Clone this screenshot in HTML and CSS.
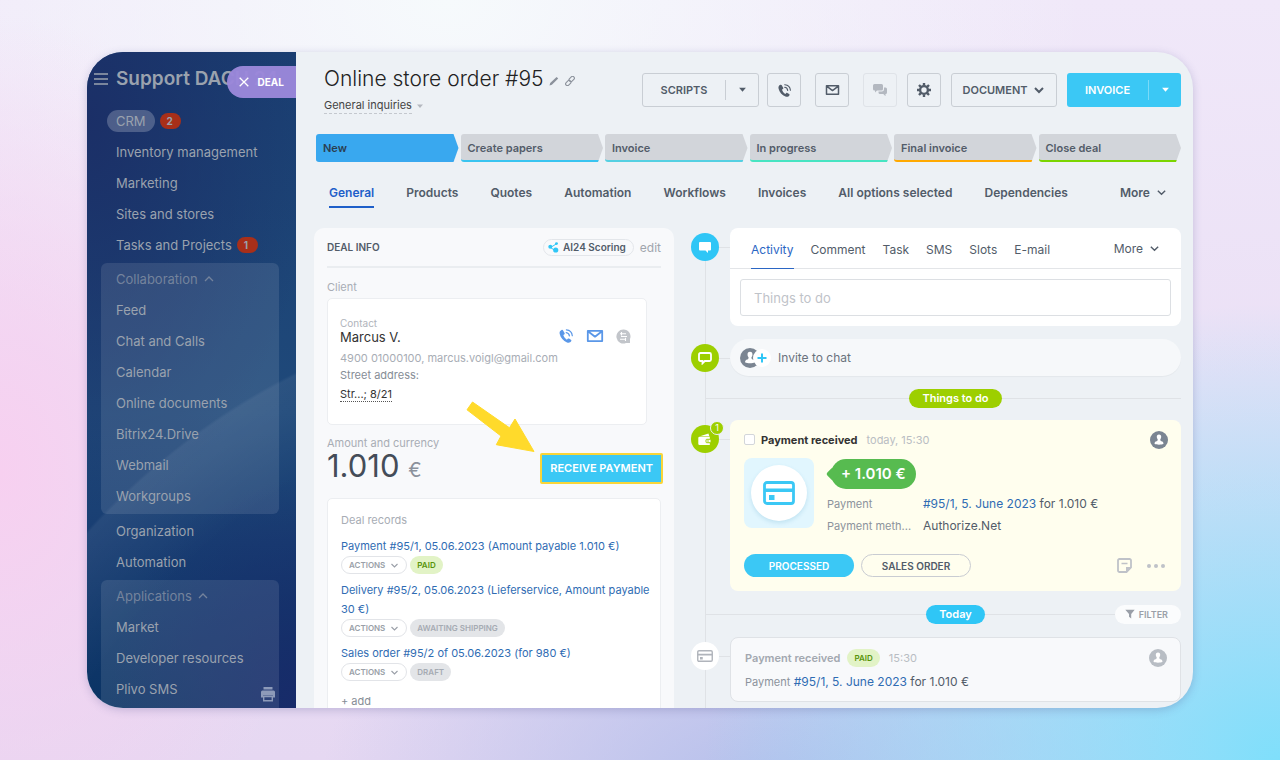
FILE: index.html
```html
<!DOCTYPE html>
<html lang="en">
<head>
    <meta charset="UTF-8" />
    <meta name="viewport" content="width=device-width, initial-scale=1.0" />
    <title>Online store order #95</title>
    <link rel="stylesheet" href="styles.css">
</head>
<body>
    <!-- shared icons -->
    <svg width="0" height="0" class="sprite" aria-hidden="true">
        <symbol id="i-down" viewBox="0 0 12 12"><path d="M2 4l4 4 4-4" fill="none" stroke="currentColor" stroke-width="1.5"/></symbol>
        <symbol id="i-up" viewBox="0 0 12 12"><path d="M2 8l4-4 4 4" fill="none" stroke="currentColor" stroke-width="1.3"/></symbol>
        <symbol id="i-caret" viewBox="0 0 8 8"><path d="M1 2.5h6L4 6z" fill="currentColor"/></symbol>
        <symbol id="i-phone" viewBox="0 0 16 16">
            <path d="M3.6 1.9C2 2.6 1.2 4 1.7 6c.9 3.8 3.6 7 7.3 8.4 1.9.6 3.5.1 4.3-1.4.3-.5.1-.9-.4-1.2l-1.9-1.2c-.5-.3-.9-.2-1.3.2l-.8.9C7.3 10.7 6 9 5.3 7.1l.9-.6c.5-.3.6-.7.5-1.2L5.1 2.4c-.3-.6-.8-.8-1.5-.5z" fill="currentColor"/>
            <path d="M8.2 4.600c1.700.2 3 1.500 3.200 3.300M8.400 1.800c3.200.3 5.600 2.700 5.900 5.900" fill="none" stroke="currentColor" stroke-width="1.2" stroke-linecap="round"/>
        </symbol>
        <symbol id="i-mail" viewBox="0 0 18 14"><path d="M1.8 1.900h14.400v10.200H1.800zM2 2.300l7 5.400 7-5.400" fill="none" stroke="currentColor" stroke-width="1.8" stroke-linejoin="round"/></symbol>
        <symbol id="i-card" viewBox="0 0 32 24">
            <rect x="1.5" y="1.5" width="29" height="21" rx="2.5" fill="none" stroke="currentColor" stroke-width="2.8"/>
            <path d="M1 7.500h30v3.500H1zM6 14h5.500v5H6z" fill="currentColor"/>
        </symbol>
        <symbol id="i-user" viewBox="0 0 18 18">
            <circle cx="9" cy="9" r="9" fill="currentColor"/>
            <path d="M9 3.400c1.600 0 2.300 1.100 2.200 2.600 0 1-.4 1.800-.9 2.300 0 1 .2 1.700 1.100 2 1.400.4 2 .9 2.100 2.500-1.200.7-2.800.9-4.500.9s-3.300-.2-4.500-.9c.1-1.600.7-2.100 2.100-2.500.9-.3 1.100-1 1.100-2-.5-.5-.9-1.300-.9-2.300C6.700 4.500 7.400 3.400 9 3.400z" fill="#fff"/>
        </symbol>
    </svg>

    <div class="window">
        <aside class="sidebar">
            <div class="brand">
                <button class="burger" aria-label="Menu"><svg width="14" height="12" viewBox="0 0 14 12"><path d="M0 1h14M0 6h14M0 11h14" stroke="currentColor" stroke-width="1.3"/></svg></button>
                <span class="brand-name">Support DACH 24</span>
            </div>
            <button class="deal-tab"><svg width="10" height="10" viewBox="0 0 10 10"><path d="M.7.7l8.600 8.600M9.300.7L.7 9.300" stroke="currentColor" stroke-width="1.3"/></svg>DEAL</button>
            <nav>
                <ul class="menu">
                    <li><a href="#" class="current">CRM</a><span class="count">2</span></li>
                    <li><a href="#">Inventory management</a></li>
                    <li><a href="#">Marketing</a></li>
                    <li><a href="#">Sites and stores</a></li>
                    <li><a href="#">Tasks and Projects</a><span class="count">1</span></li>
                </ul>
                <ul class="menu group">
                    <li><button class="group-title">Collaboration <svg width="12" height="12"><use href="#i-up"/></svg></button></li>
                    <li><a href="#">Feed</a></li>
                    <li><a href="#">Chat and Calls</a></li>
                    <li><a href="#">Calendar</a></li>
                    <li><a href="#">Online documents</a></li>
                    <li><a href="#">Bitrix24.Drive</a></li>
                    <li><a href="#">Webmail</a></li>
                    <li><a href="#">Workgroups</a></li>
                </ul>
                <ul class="menu">
                    <li><a href="#">Organization</a></li>
                    <li><a href="#">Automation</a></li>
                </ul>
                <ul class="menu group last">
                    <li><button class="group-title">Applications <svg width="12" height="12"><use href="#i-up"/></svg></button></li>
                    <li><a href="#">Market</a></li>
                    <li><a href="#">Developer resources</a></li>
                    <li><a href="#">Plivo SMS</a></li>
                </ul>
            </nav>
            <button class="print" aria-label="Print">
                <svg width="14" height="15" viewBox="0 0 14 15"><path d="M2.500 0h9v2.500h-9zM1.500 3.500h11A1.500 1.500 0 0 1 14 5v5.500h-2V8.500H2v2H0V5a1.500 1.500 0 0 1 1.500-1.500z" fill="currentColor"/><path d="M2.700 9.500h8.600v4.300H2.700z" fill="none" stroke="currentColor" stroke-width="1.4"/></svg>
            </button>
        </aside>

        <main>
            <header>
                <div class="heading">
                    <h1>Online store order #95
                        <svg width="10" height="10" viewBox="0 0 10 10"><path d="M.5 9.500l.7-2.500L7.600 1l1.600 1.500L2.900 8.700z" fill="#8b919b"/></svg>
                        <svg width="10" height="10" viewBox="0 0 10 10"><g fill="none" stroke="#8b919b" stroke-width="1.1"><rect x="3.7" y="1.2" width="6" height="3.6" rx="1.8" transform="rotate(-45 6.7 3)"/><rect x=".3" y="5.2" width="6" height="3.6" rx="1.8" transform="rotate(-45 3.3 7)"/></g></svg>
                    </h1>
                    <button class="pipeline"><span>General inquiries</span><svg width="8" height="8"><use href="#i-caret"/></svg></button>
                </div>
                <div class="toolbar">
                    <div class="split">
                        <button>SCRIPTS</button>
                        <button class="split-arrow" aria-label="More scripts"><svg width="9" height="9"><use href="#i-caret"/></svg></button>
                    </div>
                    <button class="square" aria-label="Call"><svg width="15" height="15"><use href="#i-phone"/></svg></button>
                    <button class="square spaced" aria-label="E-mail"><svg width="15" height="12"><use href="#i-mail"/></svg></button>
                    <button class="square spaced" aria-label="Chat" disabled>
                        <svg width="15" height="13" viewBox="0 0 15 13"><path d="M1.500 0h7A1.500 1.500 0 0 1 10 1.500V5a1.500 1.500 0 0 1-1.500 1.500H4L2 8.500v-2h-.5A1.500 1.500 0 0 1 0 5V1.500A1.500 1.500 0 0 1 1.500 0z" fill="currentColor"/><path d="M11 3.500h1.500A1.500 1.500 0 0 1 14 5v3.500a1.500 1.500 0 0 1-1.500 1.500v2.200L10.300 10H7a1.500 1.500 0 0 1-1.500-1.500V7.500h3.300A2.200 2.200 0 0 0 11 5.300z" fill="currentColor"/></svg>
                    </button>
                    <button class="square" aria-label="Settings">
                        <svg width="14" height="14" viewBox="0 0 14 14"><circle cx="7" cy="7" r="3.9" fill="none" stroke="currentColor" stroke-width="2.4"/><path d="M7 0v2.500M7 11.500V14M0 7h2.500M11.500 7H14M2 2l1.800 1.800M10.200 10.200L12 12M12 2l-1.800 1.800M3.800 10.200L2 12" stroke="currentColor" stroke-width="2.4"/></svg>
                    </button>
                    <button class="document">DOCUMENT <svg width="14" height="14" viewBox="0 0 14 14"><path d="M3 5l4 4 4-4" fill="none" stroke="currentColor" stroke-width="2"/></svg></button>
                    <div class="split invoice">
                        <button>INVOICE</button>
                        <button class="split-arrow" aria-label="More invoice options"><svg width="9" height="9"><use href="#i-caret"/></svg></button>
                    </div>
                </div>
            </header>

            <ol class="stages">
                <li class="active">New</li>
                <li class="cyan">Create papers</li>
                <li class="teal">Invoice</li>
                <li class="mint">In progress</li>
                <li class="orange">Final invoice</li>
                <li class="green">Close deal</li>
            </ol>

            <nav class="tabs">
                <a href="#" class="active">General</a>
                <a href="#">Products</a>
                <a href="#">Quotes</a>
                <a href="#">Automation</a>
                <a href="#">Workflows</a>
                <a href="#">Invoices</a>
                <a href="#">All options selected</a>
                <a href="#">Dependencies</a>
                <button>More <svg width="11" height="11"><use href="#i-down"/></svg></button>
            </nav>

            <div class="columns">
                <section class="deal">
                    <div class="deal-head">
                        <h2>DEAL INFO</h2>
                        <button class="scoring"><svg width="11" height="11" viewBox="0 0 11 11"><path d="M2.500 5.500L8.500 1.800M2.500 5.500l4.500 3" stroke="#2fc6f6"/><circle cx="2.3" cy="4.8" r="2" fill="#2fc6f6"/><circle cx="8.5" cy="1.6" r="1.4" fill="#2fc6f6"/><circle cx="7.7" cy="8" r="2.6" fill="#2fc6f6"/></svg>AI24 Scoring</button>
                        <button class="edit">edit</button>
                    </div>
                    <p class="label">Client</p>
                    <div class="box contact">
                        <div class="contact-top">
                            <div>
                                <p class="tiny">Contact</p>
                                <p class="name">Marcus V.</p>
                            </div>
                            <div class="contact-icons">
                                <button aria-label="Call contact"><svg width="16" height="16"><use href="#i-phone"/></svg></button>
                                <button aria-label="Mail contact"><svg width="18" height="14"><use href="#i-mail"/></svg></button>
                                <button class="off" aria-label="Message contact"><svg width="15" height="15" viewBox="0 0 15 15"><path d="M7.500.5a7 7 0 0 1 6.500 9.600V14h-4a7 7 0 1 1-2.500-13.500z" fill="currentColor"/><path d="M4 4.700h6M5 7.500h6M4 10.300h6M5.500 3v3.400M9.500 8.700v3.300" stroke="#fff" stroke-width="1.1"/></svg></button>
                            </div>
                        </div>
                        <p class="reach">4900 01000100, marcus.voigl@gmail.com</p>
                        <p class="street">Street address:</p>
                        <a href="#" class="address">Str...; 8/21</a>
                    </div>
                    <p class="label amount-label">Amount and currency</p>
                    <div class="amount">
                        <p>1.010 <span>€</span></p>
                        <div class="receive-wrap">
                            <button class="receive">RECEIVE PAYMENT</button>
                            <svg class="arrow" width="69" height="51" viewBox="0 0 69 51"><path d="M6.500 1L1 8.800l34 26.200-4.700 8.700L68 50.500 49 18l-5.500 8.800z" fill="#ffda2b" stroke="#ffda2b" stroke-linejoin="round"/></svg>
                        </div>
                    </div>
                    <div class="box records">
                        <p class="label">Deal records</p>
                        <a href="#">Payment #95/1, 05.06.2023 (Amount payable 1.010 €)</a>
                        <div class="record-row"><button class="actions">ACTIONS <svg width="9" height="9"><use href="#i-down"/></svg></button><span class="tag paid">PAID</span></div>
                        <a href="#">Delivery #95/2, 05.06.2023 (Lieferservice, Amount payable 30 €)</a>
                        <div class="record-row"><button class="actions">ACTIONS <svg width="9" height="9"><use href="#i-down"/></svg></button><span class="tag">AWAITING SHIPPING</span></div>
                        <a href="#">Sales order #95/2 of 05.06.2023 (for 980 €)</a>
                        <div class="record-row"><button class="actions">ACTIONS <svg width="9" height="9"><use href="#i-down"/></svg></button><span class="tag">DRAFT</span></div>
                        <button class="add">+ add</button>
                    </div>
                </section>

                <section class="timeline">
                    <div class="row first">
                        <span class="dot blue"><svg width="12" height="11" viewBox="0 0 12 11"><path d="M1 0h10a1 1 0 0 1 1 1v6.500a1 1 0 0 1-1 1H9V11L6.500 8.500H1a1 1 0 0 1-1-1V1a1 1 0 0 1 1-1z" fill="#fff"/></svg></span>
                        <div class="card editor">
                            <nav class="editor-tabs">
                                <a href="#" class="active">Activity</a>
                                <a href="#">Comment</a>
                                <a href="#">Task</a>
                                <a href="#">SMS</a>
                                <a href="#">Slots</a>
                                <a href="#">E-mail</a>
                                <button>More <svg width="11" height="11"><use href="#i-down"/></svg></button>
                            </nav>
                            <input type="text" aria-label="Things to do" placeholder="Things to do" />
                        </div>
                    </div>

                    <div class="row invite-row">
                        <span class="dot lime"><svg width="14" height="13" viewBox="0 0 14 13"><path d="M2.500 1h9A1.500 1.500 0 0 1 13 2.500v5A1.500 1.500 0 0 1 11.500 9H6.800L4.500 11.300V9h-2A1.500 1.500 0 0 1 1 7.500v-5A1.500 1.500 0 0 1 2.500 1z" fill="none" stroke="#fff" stroke-width="1.8"/></svg></span>
                        <button class="invite">
                            <svg width="32" height="20" viewBox="0 0 32 20"><svg x="0" y="0" width="20" height="20" class="grey"><use href="#i-user"/></svg><circle cx="22" cy="10" r="9" fill="#fff"/><path d="M22 5.500v9M17.500 10h9" stroke="#2fc6f6" stroke-width="2"/></svg>
                            Invite to chat
                        </button>
                    </div>

                    <div class="divider"><span class="pill lime">Things to do</span></div>

                    <div class="row pay-row">
                        <span class="dot lime"><svg width="14" height="13" viewBox="0 0 14 13"><path d="M2 3.200L10.500.5l.8 2.700z" fill="#fff"/><path d="M1.500 3.800h10.300v8.200H1.500A1.300 1.300 0 0 1 .3 10.700V5A1.300 1.300 0 0 1 1.500 3.800z" fill="#fff"/><rect x="8" y="6.3" width="5" height="3.4" rx=".8" fill="#fff" stroke="#9dcf00"/><circle cx="10" cy="8" r=".8" fill="#9dcf00"/></svg><b class="badge">1</b></span>
                        <article class="card payment">
                            <div class="payment-head">
                                <input type="checkbox" id="done" />
                                <label for="done">Payment received</label>
                                <time>today, 15:30</time>
                                <svg class="grey" width="18" height="18"><use href="#i-user"/></svg>
                            </div>
                            <div class="payment-body">
                                <div class="logo"><span><svg width="32" height="24"><use href="#i-card"/></svg></span></div>
                                <div class="payment-info">
                                    <p class="sum">+ 1.010 €</p>
                                    <dl>
                                        <dt>Payment</dt><dd><a href="#">#95/1, 5. June 2023</a> for 1.010 €</dd>
                                        <dt title="Payment method">Payment meth...</dt><dd>Authorize.Net</dd>
                                    </dl>
                                </div>
                            </div>
                            <div class="payment-foot">
                                <button class="processed">PROCESSED</button>
                                <button class="sales">SALES ORDER</button>
                                <button class="note" aria-label="Note"><svg width="15" height="15" viewBox="0 0 15 15"><path d="M2.500 1h10A1.500 1.500 0 0 1 14 2.500V9.500L9.500 14h-7A1.500 1.500 0 0 1 1 12.500v-10A1.500 1.500 0 0 1 2.500 1z" fill="none" stroke="currentColor" stroke-width="1.8"/><path d="M4.500 5.500h6" stroke="currentColor" stroke-width="1.5"/><path d="M9 9h5v1l-4 4H9z" fill="currentColor"/></svg></button>
                                <button class="dots" aria-label="More actions"><svg width="18" height="4" viewBox="0 0 18 4"><g fill="currentColor"><circle cx="2" cy="2" r="2"/><circle cx="9" cy="2" r="2"/><circle cx="16" cy="2" r="2"/></g></svg></button>
                            </div>
                        </article>
                    </div>

                    <div class="divider today"><span class="pill blue">Today</span><button class="filter"><svg width="10" height="10" viewBox="0 0 10 10"><path d="M.3.800h9.400L6.200 5v4.500L4 7.800V5z" fill="currentColor"/></svg>FILTER</button></div>

                    <div class="row log-row">
                        <span class="dot white"><svg width="16" height="12"><use href="#i-card"/></svg></span>
                        <article class="card log">
                            <div class="log-head">
                                <h3>Payment received</h3>
                                <span class="tag paid">PAID</span>
                                <time>15:30</time>
                                <svg width="18" height="18"><use href="#i-user"/></svg>
                            </div>
                            <p><span>Payment</span> <a href="#">#95/1, 5. June 2023</a> for 1.010 €</p>
                        </article>
                    </div>
                </section>
            </div>
        </main>
    </div>
</body>
</html>
```
FILE: styles.css
```css
* {
    box-sizing: border-box;
}
body {
    margin: 0;
    height: 100vh;
    padding: 52px 87px;
    font-family: Inter, "Liberation Sans", sans-serif;
    font-size: 12px;
    color: #525c69;
    overflow: hidden;
    background:
        radial-gradient(ellipse 45% 60% at 100% 100%, #7fdffb 0%, rgba(127,223,251,0) 100%),
        radial-gradient(ellipse 35% 40% at 60% 105%, #b3bfeb 0%, rgba(179,191,235,0) 100%),
        radial-gradient(ellipse 25% 60% at 0% 62%, #f7d0f0 0%, rgba(247,208,240,0) 100%),
        radial-gradient(ellipse 50% 60% at 35% 0%, #f6fafc 0%, rgba(246,250,252,0) 100%),
        linear-gradient(#f0e8f9, #e6d8f2);
}
h1, h2, h3, p, ul, ol, dl, dd {
    margin: 0;
    padding: 0;
}
ul, ol {
    list-style: none;
}
a {
    color: inherit;
    text-decoration: none;
}
button {
    font: inherit;
    color: inherit;
    background: none;
    border: 0;
    padding: 0;
    cursor: pointer;
    white-space: nowrap;
}
button svg {
    flex: none;
}
.sprite {
    position: absolute;
}
.window {
    display: flex;
    height: 100%;
    border-radius: 36px;
    overflow: hidden;
    background: #edf1f5;
    box-shadow: 0 2px 8px rgba(70,70,140,0.25);
}

/* sidebar */
.sidebar {
    position: relative;
    flex: none;
    width: 209px;
    overflow: hidden;
    color: #9aa2ae;
    background:
        radial-gradient(circle at 530px 961px, rgba(255,255,255,0) 620px, rgba(255,255,255,0.06) 714px, rgba(255,255,255,0) 717px),
        radial-gradient(ellipse 90% 35% at 100% 100%, #182b6a 0%, rgba(24,43,106,0) 100%),
        radial-gradient(ellipse 110% 60% at 0% 10%, #1b2f67 0%, rgba(27,47,103,0) 100%),
        linear-gradient(#1a3f72, #1f497a 55%, #183d72 75%, #0a3364);
}
.brand {
    display: flex;
    align-items: center;
    gap: 8px;
    height: 53px;
    padding-left: 7px;
}
.burger {
    display: flex;
}
.brand-name {
    font-size: 19px;
    font-weight: 600;
    white-space: nowrap;
}
.deal-tab {
    position: absolute;
    top: 14px;
    right: 0;
    display: flex;
    align-items: center;
    gap: 9px;
    height: 32px;
    padding: 0 12px;
    border-radius: 16px 0 0 16px;
    background: rgba(155,135,218,0.97);
    color: #fff;
    font-size: 10px;
    font-weight: 700;
}
.menu {
    padding: 0 14px;
    font-size: 13px;
}
.menu li {
    display: flex;
    align-items: center;
    gap: 5px;
    height: 31px;
    padding-left: 15px;
}
.menu.group {
    margin: 3px 17px 1px 14px;
    padding: 0 0 3px;
    border-radius: 6px;
    background: rgba(255,255,255,0.1);
}
.menu.group.last {
    margin-bottom: 0;
    padding-bottom: 20px;
}
.current {
    margin-left: -9px;
    padding: 3px 9px;
    border-radius: 11px;
    background: rgba(255,255,255,0.22);
}
.count {
    min-width: 21px;
    padding: 0 7px;
    border-radius: 8px;
    background: #a82f19;
    font-size: 10px;
    font-weight: 700;
    line-height: 16px;
}
.group-title {
    display: flex;
    align-items: center;
    gap: 5px;
    color: #74839c;
}
.print {
    position: absolute;
    right: 21px;
    bottom: 3px;
    color: #8d9ab9;
}

/* header */
main {
    flex: 1;
    min-width: 0;
    padding: 13px 12px 0 18px;
}
header {
    display: flex;
    justify-content: space-between;
    height: 48px;
    padding-left: 10px;
}
h1 {
    font-size: 21px;
    font-weight: 300;
    line-height: 27px;
    color: #222;
    white-space: nowrap;
}
.pipeline {
    display: flex;
    align-items: center;
    gap: 4px;
    margin-top: 6px;
    font-size: 11px;
    line-height: 15px;
    color: #444;
}
.pipeline span {
    border-bottom: 1px dashed #c4c8ce;
}
.pipeline svg {
    color: #b4b8bf;
}
.toolbar {
    display: flex;
    align-items: center;
    gap: 10px;
    height: 34px;
    margin-top: 8px;
    font-size: 11px;
    font-weight: 600;
    color: #525c69;
}
.split, .square, .document {
    display: flex;
    align-items: center;
    justify-content: center;
    height: 34px;
    border: 1px solid #c9ced4;
    border-radius: 3px;
}
.split {
    width: 117px;
}
.split > button {
    flex: 1;
}
.split .split-arrow {
    flex: none;
    width: 33px;
    height: 20px;
    border-left: 1px solid #c9ced4;
}
.split + .square {
    margin-left: -2px;
}
.square {
    width: 34px;
}
.square.spaced {
    margin-left: 4px;
}
.square:disabled {
    color: #b3b8c0;
    border-color: #dfe3e8;
}
.document {
    gap: 4px;
    width: 106px;
}
.invoice {
    width: 114px;
    border: 0;
    background: #3bc8f5;
    color: #fff;
}
.invoice .split-arrow {
    border-color: #7adaf8;
}

/* stages */
.stages {
    display: grid;
    grid-template-columns: repeat(6, 1fr);
    gap: 2px;
    margin: 21px 0 0 2px;
}
.stages li {
    height: 28px;
    padding-left: 7px;
    border-bottom: 2px solid;
    border-radius: 3px;
    background: #d2d5da;
    color: #525c69;
    font-size: 11px;
    font-weight: 600;
    line-height: 28px;
    clip-path: polygon(0 0, calc(100% - 5px) 0, 100% 50%, calc(100% - 5px) 100%, 0 100%);
}
.stages .active {
    background: #39a8ef;
    border-color: #39a8ef;
    color: #2b3f52;
}
.stages .cyan { border-color: #39c4f0; }
.stages .teal { border-color: #55d0e2; }
.stages .mint { border-color: #47e4c2; }
.stages .orange { border-color: #ffa900; }
.stages .green { border-color: #7bd500; }

/* tabs */
.tabs {
    display: flex;
    justify-content: space-between;
    padding: 0 14px 0 15px;
    margin-top: 17px;
    font-size: 12px;
    font-weight: 600;
    line-height: 27px;
}
.tabs a {
    border-bottom: 2px solid transparent;
}
.tabs .active {
    color: #1f5fc9;
    border-color: #1f5fc9;
}
.tabs button, .editor-tabs button {
    display: flex;
    align-items: center;
    gap: 6px;
}
.tabs button {
    height: 27px;
    margin-left: 20px;
}

.columns {
    display: grid;
    grid-template-columns: 360fr 490fr;
    gap: 17px;
    margin-top: 20px;
}

/* deal */
.deal {
    min-width: 0;
    padding: 0 13px 40px;
    border-radius: 10px;
    background: #f8f9fb;
}
.deal-head {
    display: flex;
    align-items: center;
    height: 40px;
    border-bottom: 2px solid #eaedf0;
}
h2 {
    flex: 1;
    font-size: 10px;
    font-weight: 600;
}
.scoring {
    display: flex;
    align-items: center;
    gap: 4px;
    height: 17px;
    padding: 0 7px 0 4px;
    border: 1px solid #e3e6ea;
    border-radius: 9px;
    font-size: 10px;
    font-weight: 600;
}
.edit {
    margin-left: 6px;
    color: #a0a5ad;
}
.label {
    font-size: 11px;
    line-height: 16px;
    color: #a8adb5;
}
.deal-head + .label {
    margin-top: 11px;
}
.box {
    border: 1px solid #eceef1;
    border-radius: 5px;
    background: #fff;
}
.contact {
    margin: 3px 14px 0 0;
    padding: 18px 12px 22px;
}
.contact-top {
    display: flex;
    justify-content: space-between;
    align-items: center;
}
.tiny {
    font-size: 10px;
    line-height: 12px;
    color: #b0b4bb;
}
.name {
    font-size: 13px;
    line-height: 16px;
    color: #333;
}
.contact-icons {
    display: flex;
    align-items: center;
    gap: 12px;
    padding: 10px 3px 0 0;
    color: #5a97e8;
}
.contact-icons button {
    display: flex;
}
.contact-icons .off {
    color: #c2c5ca;
}
.reach {
    margin-top: 4px;
    font-size: 11px;
    line-height: 18px;
    color: #a8adb5;
}
.street {
    font-size: 11px;
    line-height: 16px;
    color: #868d96;
}
.address {
    display: inline-block;
    margin-top: 4px;
    border-bottom: 1px dotted #555;
    font-size: 11px;
    line-height: 14px;
    color: #333;
}
.amount-label {
    margin-top: 10px;
}
.amount {
    display: flex;
    justify-content: space-between;
    align-items: center;
    height: 34px;
    margin-right: -2px;
}
.amount p {
    font-size: 31px;
    line-height: 32px;
    color: #444c58;
}
.amount p span {
    font-size: 20px;
    color: #8b919b;
}
.receive-wrap {
    position: relative;
}
.receive {
    height: 31px;
    padding: 0 8px;
    border: 2px solid #f9d538;
    border-radius: 2px;
    background: #3bc8f5;
    color: #fff;
    font-size: 11px;
    font-weight: 600;
}
.arrow {
    position: absolute;
    right: calc(100% + 5px);
    bottom: calc(100% + 1px);
}
.records {
    margin-top: 13px;
    padding: 13px 8px 20px 13px;
}
.records a {
    display: block;
    font-size: 11px;
    line-height: 19px;
    color: #2f6cb3;
}
.records .label {
    margin-bottom: 9px;
}
.record-row {
    display: flex;
    gap: 3px;
    margin-bottom: 7px;
}
.actions, .tag {
    display: flex;
    align-items: center;
    height: 18px;
    padding: 0 7px;
    border-radius: 9px;
    font-size: 8px;
    font-weight: 600;
}
.actions {
    gap: 5px;
    border: 1px solid #e2e4e8;
    color: #9a9fa8;
}
.tag {
    background: #e3e5e8;
    color: #a6abb3;
}
.tag.paid {
    background: #e2f3c6;
    color: #589309;
}
.add {
    margin-top: 6px;
    font-size: 11px;
    color: #868d96;
}

/* timeline */
.timeline {
    min-width: 0;
    background: linear-gradient(#dfe2e6, #dfe2e6) 14px 20px / 1px 100% no-repeat;
}
.row {
    display: flex;
    align-items: flex-start;
    background: linear-gradient(#dfe2e6, #dfe2e6) 28px 19px / 11px 1px no-repeat;
}
.dot {
    position: relative;
    display: flex;
    flex: none;
    align-items: center;
    justify-content: center;
    width: 28px;
    height: 28px;
    margin: 5px 11px 0 0;
    border-radius: 50%;
}
.blue { background: #2fc6f6; }
.lime { background: #9dcf00; }
.dot.white {
    background: #fff;
    color: #b0b4bb;
}
.card {
    flex: 1;
    min-width: 0;
    border-radius: 8px;
}
.editor {
    background: #fff;
    padding-bottom: 10px;
}
.editor-tabs {
    display: flex;
    gap: 17px;
    height: 41px;
    padding: 0 21px;
    border-bottom: 1px solid #e3e5e8;
    font-size: 12px;
    line-height: 43px;
}
.editor-tabs .active {
    height: 41px;
    color: #2b66c4;
    border-bottom: 1px solid #2b66c4;
}
.editor-tabs button {
    margin-left: auto;
}
.editor input {
    display: block;
    width: calc(100% - 20px);
    height: 37px;
    margin: 10px 10px 0;
    padding: 0 13px;
    border: 1px solid #dcdfe3;
    border-radius: 3px;
    font: inherit;
    font-size: 13px;
}
.editor input::placeholder {
    color: #bfc3c9;
}
.invite-row {
    margin-top: 13px;
}
.invite {
    display: flex;
    flex: 1;
    align-items: center;
    gap: 6px;
    height: 37px;
    padding-left: 10px;
    border-radius: 19px;
    background: #f6f8fa;
    box-shadow: 0 1px 1px rgba(0,0,0,0.04);
    color: #6a727d;
}
.grey {
    color: #7b8592;
}
.divider {
    display: grid;
    grid-template-columns: 1fr auto 1fr;
    align-items: center;
    height: 20px;
    margin: 12px 0;
    padding-left: 39px;
    background: linear-gradient(#dfe2e6, #dfe2e6) 14px 50% / 100% 1px no-repeat;
}
.divider.today {
    margin: 13px 0;
}
.pill {
    grid-column: 2;
    padding: 0 13px;
    border-radius: 10px;
    color: #fff;
    font-size: 11px;
    font-weight: 600;
    line-height: 19px;
}
.badge {
    position: absolute;
    top: -4px;
    right: -5px;
    width: 14px;
    border: 1px solid #edf1f5;
    border-radius: 7px;
    background: #9dcf00;
    color: #fff;
    font-size: 9px;
    font-weight: 400;
    line-height: 12px;
    text-align: center;
}
.payment {
    padding: 10px 13px 14px 14px;
    background: #fffeee;
}
.payment-head, .log-head {
    display: flex;
    align-items: center;
    height: 19px;
}
.payment-head svg, .log-head svg {
    margin-left: auto;
}
.payment-head input {
    appearance: none;
    width: 11px;
    height: 11px;
    margin: 0 6px 0 0;
    border: 1px solid #d3d6da;
    border-radius: 2px;
    background: #fff;
}
.payment-head label {
    font-size: 11px;
    font-weight: 700;
    color: #333;
}
time {
    margin-left: 9px;
    font-size: 11px;
    color: #b9bdc3;
}
.payment-body {
    display: flex;
    gap: 13px;
    margin-top: 9px;
}
.logo {
    display: grid;
    flex: none;
    place-items: center;
    width: 70px;
    height: 70px;
    border-radius: 8px;
    background: #e1f6fe;
    color: #3bc8f5;
}
.logo span {
    display: grid;
    place-items: center;
    width: 56px;
    height: 56px;
    border-radius: 50%;
    background: #fff;
    box-shadow: 0 2px 4px rgba(60,150,190,0.2);
}
.payment-info {
    flex: 1;
    min-width: 0;
}
.sum {
    position: relative;
    width: fit-content;
    margin: 1px 0 0 4px;
    padding: 0 10px;
    border-radius: 15px;
    background: #57bb50;
    color: #fff;
    font-size: 15px;
    font-weight: 600;
    line-height: 30px;
}
/* pointer of the sum bubble */
.sum::before {
    content: "";
    position: absolute;
    top: 10px;
    left: -3px;
    width: 10px;
    height: 10px;
    border-radius: 2px;
    background: #57bb50;
    transform: rotate(45deg);
}
dl {
    display: grid;
    grid-template-columns: 86px 1fr;
    column-gap: 10px;
    margin-top: 4px;
    line-height: 22px;
}
dt {
    white-space: nowrap;
    font-size: 11px;
    color: #8c939c;
}
dd a, .log a {
    color: #2f6cb3;
}
.payment-foot {
    display: flex;
    align-items: center;
    gap: 7px;
    margin-top: 17px;
    font-size: 10px;
    font-weight: 600;
    color: #bfc2c8;
}
.processed, .sales {
    width: 110px;
    height: 23px;
    border-radius: 12px;
}
.processed {
    background: #3bc8f5;
    color: #fff;
}
.sales {
    border: 1px solid #c9ccd2;
    color: #525c69;
}
.note {
    display: flex;
    margin-left: auto;
}
.dots {
    display: flex;
    margin: 0 3px 0 8px;
}
.filter {
    display: flex;
    align-items: center;
    justify-self: end;
    gap: 4px;
    height: 19px;
    padding: 0 13px 0 10px;
    border-radius: 10px;
    background: #fbfcfd;
    color: #9a9fa8;
    font-size: 9px;
    font-weight: 600;
}
.log {
    padding: 10px 13px 10px 14px;
    border: 1px solid #dfe2e6;
    background: #f8f9fb;
    color: #525c69;
}
.log-head svg {
    color: #b8bdc4;
}
h3 {
    margin-right: 7px;
    font-size: 11px;
    font-weight: 600;
    color: #a3a8b0;
}
.log p {
    margin-top: 6px;
    line-height: 18px;
}
.log p span {
    font-size: 11px;
    color: #8c939c;
}
```
